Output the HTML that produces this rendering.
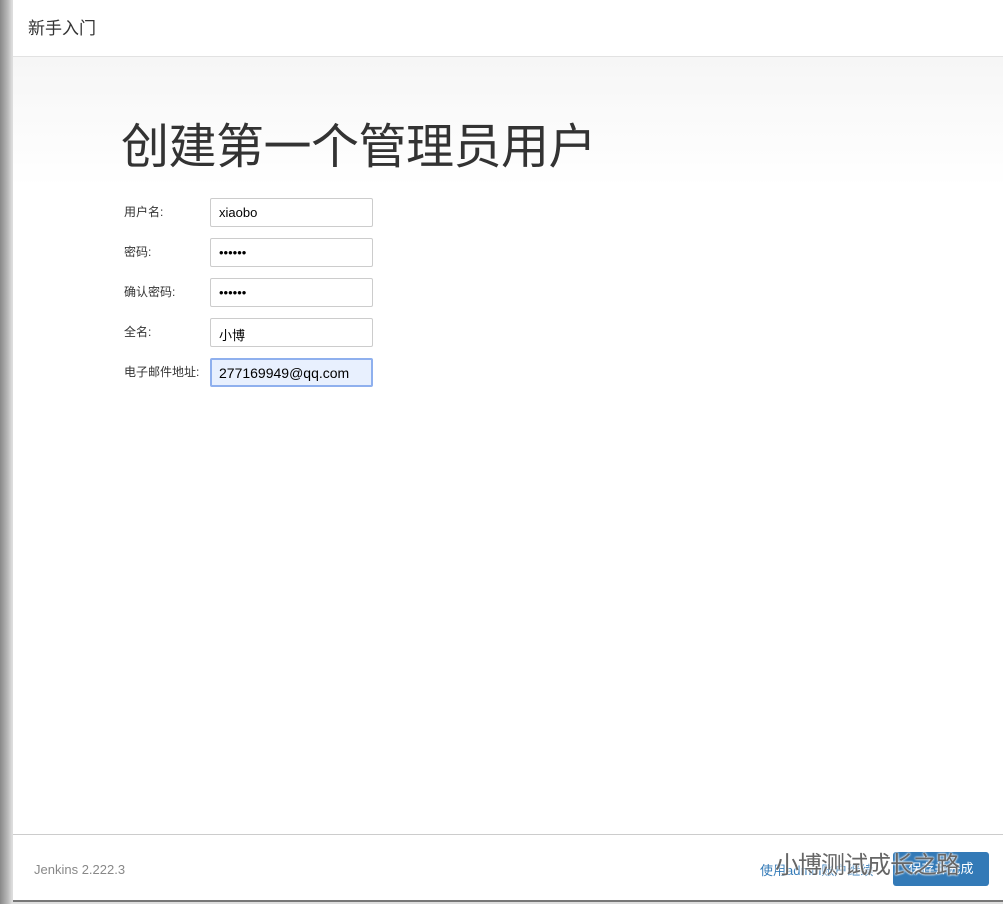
<!DOCTYPE html>
<html><head><meta charset="utf-8"><style>
*{box-sizing:border-box;margin:0;padding:0}
body{width:1003px;height:904px;background:linear-gradient(90deg,#888 0,#bbb 8px,#ddd 12px);font-family:"Liberation Sans","Noto Sans CJK SC",sans-serif;position:relative;overflow:hidden}
.page{position:absolute;left:13px;top:0;width:990px;height:902px;background:#fff;border-bottom:2px solid #777}
.hdr{height:57px;border-bottom:1px solid #e2e2e2;padding:14px 15px;font-size:17px;color:#333}
.body{position:absolute;top:57px;left:0;right:0;height:777px;background:linear-gradient(180deg,#f6f6f6 0,#fff 130px)}
h1{position:absolute;left:108px;top:50px;font-size:48px;font-weight:normal;color:#333;letter-spacing:-0.5px}
.row{position:absolute;left:111px;font-size:12px;color:#333}
.inp{position:absolute;left:197px;width:163px;height:29px;border:1px solid #ccc;border-radius:2px;font-size:13px;padding:6px 8px;color:#000;background:#fff}
.foc{border-color:#8fb0ee;background:#e8f0fe;border-width:2px;padding:5px 7px;font-size:14px}
.ft{position:absolute;top:834px;left:0;right:0;height:66px;border-top:1px solid #ccc}
.ver{position:absolute;left:21px;top:27px;font-size:13px;color:#888}
.lnk{position:absolute;left:747px;top:25px;font-size:13px;color:#337ab7}
.btn{position:absolute;left:880px;top:17px;width:96px;height:34px;background:#337ab7;border-radius:3px;color:#fff;font-size:13px;text-align:center;line-height:34px}
.wm{position:absolute;left:762px;top:10px;font-size:24px;color:#666;letter-spacing:-1px;text-shadow:0 0 2px #fff,0 0 2px #fff}
</style></head><body>
<div class="page">
<div class="hdr">新手入门</div>
<div class="body">
<h1>创建第一个管理员用户</h1>
</div>
<div class="row" style="top:203px">用户名:</div><div class="inp" style="top:198px">xiaobo</div>
<div class="row" style="top:243px">密码:</div><div class="inp" style="top:238px">••••••</div>
<div class="row" style="top:283px">确认密码:</div><div class="inp" style="top:278px">••••••</div>
<div class="row" style="top:323px">全名:</div><div class="inp" style="top:318px">小博</div>
<div class="row" style="top:363px">电子邮件地址:</div><div class="inp foc" style="top:358px">277169949@qq.com</div>
<div class="ft">
<div class="ver">Jenkins 2.222.3</div>
<div class="lnk">使用admin账户继续</div>
<div class="btn">保存并完成</div>
<div class="wm">小博测试成长之路</div>
</div>
</div>
</body></html>
